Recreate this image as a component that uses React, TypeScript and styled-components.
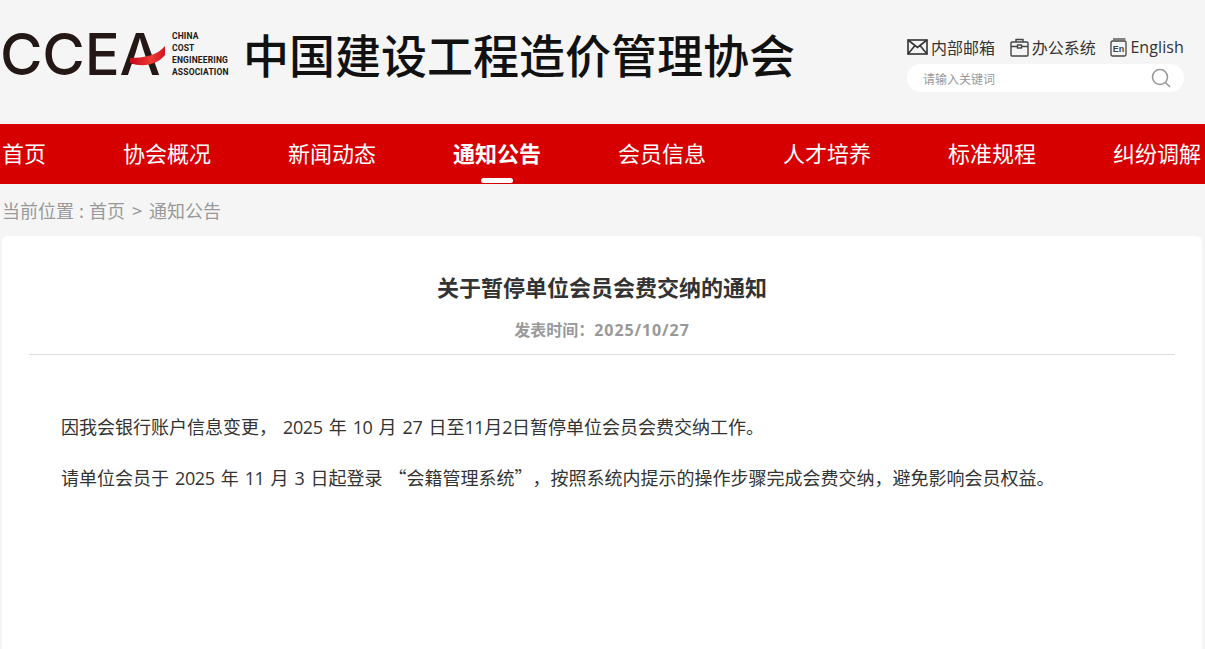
import React from "react";
import styled, { createGlobalStyle } from "styled-components";

const cjk = `"Noto Sans CJK SC", "Noto Sans", sans-serif`;

const Global = createGlobalStyle`
  html, body { margin: 0; padding: 0; background: #f5f5f5; overflow: hidden; }
  body { font-family: ${cjk}; height: 649px; text-spacing-trim: space-all; }
`;

const Header = styled.header`
  height: 124px;
  display: flex;
  align-items: flex-start;
  justify-content: space-between;
  padding: 0 21px 0 3px;
  box-sizing: border-box;
`;
const Brand = styled.div`
  display: flex;
  align-items: center;
  height: 108px;
`;
const LogoMark = styled.div`
  position: relative;
  width: 166px;
  height: 44px;
  display: flex;
  align-items: center;
`;
const LogoLetters = styled.span`
  font-family: "Inter", "Liberation Sans", sans-serif;
  font-weight: 500;
  font-size: 58px;
  line-height: 44px;
  letter-spacing: -0.2px;
  margin-left: -3px;
  color: #231815;
`;
const Swoosh = styled.svg`
  position: absolute;
  left: 127px;
  top: 14px;
  width: 36px;
  height: 22px;
`;
const LogoEnglish = styled.div`
  margin-left: 3px;
  width: 60px;
  font-family: "Roboto", "Liberation Sans", sans-serif;
  font-weight: 700;
  font-size: 8.5px;
  line-height: 12px;
  letter-spacing: 0.15px;
  color: #231815;
`;
const SiteName = styled.h1`
  margin: -3px 0 0 11px;
  font-family: ${cjk};
  font-size: 46px;
  font-weight: 500;
  line-height: 60px;
  letter-spacing: 0;
  color: #111;
  white-space: nowrap;
`;
const Tools = styled.div`
  width: 277px;
  padding-top: 36px;
`;
const Links = styled.div`
  display: flex;
  justify-content: space-between;
  height: 22px;
  align-items: center;
`;
const ToolLink = styled.a`
  display: flex;
  align-items: center;
  gap: 3px;
  font-size: 16px;
  line-height: 22px;
  color: #333;
`;
const LatinLabel = styled.span`
  font-family: "Open Sans", sans-serif;
  letter-spacing: 0.1px;
`;
const SearchBox = styled.div`
  margin-top: 6px;
  height: 28px;
  border-radius: 14px;
  background: #fff;
  display: flex;
  align-items: center;
  justify-content: space-between;
  padding: 0 13px 0 16px;
`;
const Placeholder = styled.span`
  font-size: 12px;
  color: #999;
`;
const Nav = styled.nav`
  height: 60px;
  background: #d60000;
  display: flex;
  justify-content: space-between;
  padding: 0 4px 0 2px;
`;
const NavItem = styled.a<{ $active?: boolean }>`
  position: relative;
  font-size: 22px;
  line-height: 56px;
  color: #fff;
  font-weight: ${(p) => (p.$active ? 700 : 400)};
  white-space: nowrap;
  &::after {
    content: "";
    display: ${(p) => (p.$active ? "block" : "none")};
    position: absolute;
    left: 50%;
    top: 54px;
    width: 32px;
    height: 5px;
    margin-left: -16px;
    border-radius: 3px;
    background: #fff;
  }
`;
const Crumbs = styled.div`
  height: 52px;
  display: flex;
  align-items: center;
  gap: 7px;
  padding-left: 2px;
  font-size: 18px;
  word-spacing: 1px;
  color: #999;
`;
const Card = styled.main`
  margin: 0 3px 0 2px;
  height: 440px;
  padding: 0 27px;
  background: #fff;
  border-radius: 6px;
`;
const ArticleHead = styled.div`
  height: 119px;
  border-bottom: 1px solid #ddd;
  text-align: center;
  box-sizing: border-box;
  padding-top: 34px;
`;
const ArticleTitle = styled.h2`
  margin: 0;
  font-size: 22px;
  line-height: 32px;
  font-weight: 700;
  color: #333;
`;
const ArticleDate = styled.div`
  margin-top: 15px;
  font-size: 16px;
  line-height: 24px;
  font-weight: 700;
  color: #999;
`;
const DateValue = styled.span`
  font-family: "Open Sans", sans-serif;
  letter-spacing: 0.9px;
`;
const Body = styled.div`
  padding: 58px 32px 0;
`;
const Para = styled.p`
  margin: 0 0 24px;
  font-size: 18px;
  line-height: 26px;
  word-spacing: 2px;
  color: #333;
  white-space: nowrap;
`;
const Num = styled.span`
  font-family: "Open Sans", sans-serif;
  letter-spacing: -0.4px;
`;

const MailIcon = () => (
  <svg width="21" height="16" viewBox="0 0 21 16" fill="none" stroke="#333" strokeWidth="1.6">
    <rect x="1" y="1" width="19" height="14" />
    <path d="M1 1l9.5 7.5L20 1M1 15l7-8.5M20 15l-7-8.5" />
  </svg>
);
const CaseIcon = () => (
  <svg width="19" height="19" viewBox="0 0 19 19" fill="none" stroke="#444" strokeWidth="1.4">
    <rect x="1" y="4" width="17" height="14" rx="1" />
    <path d="M6 4V1.5h7V4M1 8.5h6M12 8.5h6" />
    <rect x="7.5" y="7" width="4" height="3" />
  </svg>
);
const EnIcon = () => (
  <svg width="17" height="19" viewBox="0 0 17 19" fill="none" stroke="#444" strokeWidth="1.3">
    <rect x="1" y="3" width="15" height="15" rx="1.5" />
    <path d="M3 1h12.5" />
    <text x="8.5" y="14" textAnchor="middle" fontFamily="Liberation Sans" fontWeight="700" fontSize="9" fill="#444" stroke="none">En</text>
  </svg>
);
const SearchIcon = () => (
  <svg width="20" height="20" viewBox="0 0 20 20" fill="none" stroke="#999" strokeWidth="1.6">
    <circle cx="9" cy="9" r="7.5" />
    <path d="M14.5 14.5L19 19" />
  </svg>
);

const navItems = ["首页", "协会概况", "新闻动态", "通知公告", "会员信息", "人才培养", "标准规程", "纠纷调解"];

export default function App() {
  return (
    <>
      <Global />
      <Header>
        <Brand>
          <LogoMark>
            <LogoLetters>CCEA</LogoLetters>
            <Swoosh viewBox="0 0 36 22">
              <defs>
                <linearGradient id="sw" x1="0" x2="1" y1="0" y2="0">
                  <stop offset="0" stopColor="#c4061a" />
                  <stop offset="0.6" stopColor="#ee3a33" />
                  <stop offset="1" stopColor="#d01424" />
                </linearGradient>
              </defs>
              <path d="M0 12C14 12 28 9 35 0V9C28 18 14 22 0 17Z" fill="url(#sw)" />
            </Swoosh>
          </LogoMark>
          <LogoEnglish>
            CHINA
            <br />
            COST
            <br />
            ENGINEERING
            <br />
            ASSOCIATION
          </LogoEnglish>
          <SiteName>中国建设工程造价管理协会</SiteName>
        </Brand>
        <Tools>
          <Links>
            <ToolLink><MailIcon />内部邮箱</ToolLink>
            <ToolLink><CaseIcon />办公系统</ToolLink>
            <ToolLink><EnIcon /><LatinLabel>English</LatinLabel></ToolLink>
          </Links>
          <SearchBox>
            <Placeholder>请输入关键词</Placeholder>
            <SearchIcon />
          </SearchBox>
        </Tools>
      </Header>
      <Nav>
        {navItems.map((n) => (
          <NavItem key={n} $active={n === "通知公告"}>{n}</NavItem>
        ))}
      </Nav>
      <Crumbs>
        <span>当前位置 : 首页</span>
        <span>&gt;</span>
        <span>通知公告</span>
      </Crumbs>
      <Card>
        <ArticleHead>
          <ArticleTitle>关于暂停单位会员会费交纳的通知</ArticleTitle>
          <ArticleDate>发表时间：<DateValue>2025/10/27</DateValue></ArticleDate>
        </ArticleHead>
        <Body>
          <Para>因我会银行账户信息变更， <Num>2025</Num> 年 <Num>10</Num> 月 <Num>27</Num> 日至<Num>11</Num>月<Num>2</Num>日暂停单位会员会费交纳工作。</Para>
          <Para>请单位会员于 <Num>2025</Num> 年 <Num>11</Num> 月 <Num>3</Num> 日起登录 “会籍管理系统”，按照系统内提示的操作步骤完成会费交纳，避免影响会员权益。</Para>
        </Body>
      </Card>
    </>
  );
}
